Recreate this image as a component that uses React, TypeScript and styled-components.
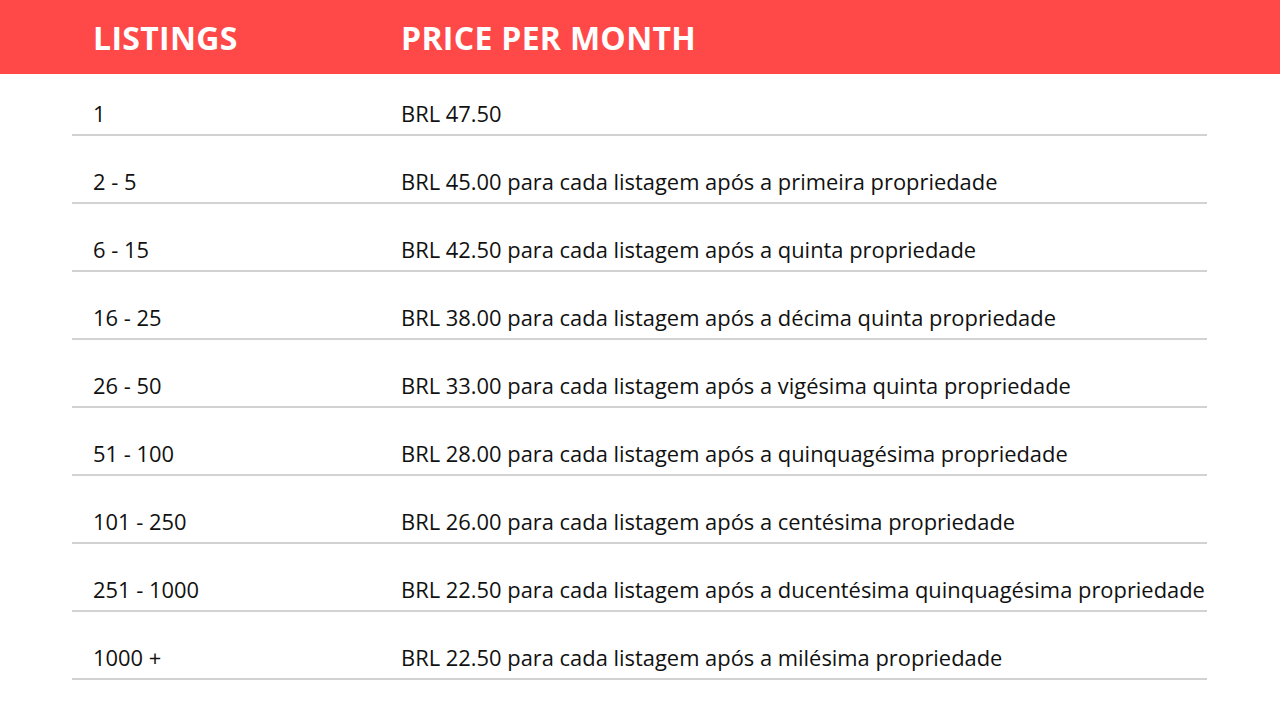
import styled, { createGlobalStyle } from 'styled-components';

const GlobalStyle = createGlobalStyle`
  body {
    margin: 0;
    background: #fff;
    font-family: 'Open Sans', 'Noto Sans', sans-serif;
  }
`;

const Page = styled.div`
  width: 1280px;
  height: 720px;
  overflow: hidden;
  background: #fff;
`;

const Header = styled.div`
  display: grid;
  grid-template-columns: 308px 1fr;
  align-items: center;
  height: 74px;
  padding-left: 93px;
  background-color: #ff4848;
  color: #fff;
  font-weight: 700;
  font-size: 32px;
  letter-spacing: 0.3px;
`;

const Table = styled.div`
  margin: 0 72px;
  width: 1135px;
`;

const Row = styled.div`
  display: grid;
  grid-template-columns: 308px 1fr;
  align-items: end;
  height: 68px;
  padding-left: 21px;
  padding-bottom: 7px;
  box-sizing: border-box;
  border-bottom: 2px solid #d2d2d2;
  color: #111;
  font-size: 21.9px;
  line-height: 26px;
  white-space: nowrap;

  &:first-child {
    height: 62px;
  }
`;

const rows: [string, string][] = [
  ['1', 'BRL 47.50'],
  ['2 - 5', 'BRL 45.00 para cada listagem após a primeira propriedade'],
  ['6 - 15', 'BRL 42.50 para cada listagem após a quinta propriedade'],
  ['16 - 25', 'BRL 38.00 para cada listagem após a décima quinta propriedade'],
  ['26 - 50', 'BRL 33.00 para cada listagem após a vigésima quinta propriedade'],
  ['51 - 100', 'BRL 28.00 para cada listagem após a quinquagésima propriedade'],
  ['101 - 250', 'BRL 26.00 para cada listagem após a centésima propriedade'],
  ['251 - 1000', 'BRL 22.50 para cada listagem após a ducentésima quinquagésima propriedade'],
  ['1000 +', 'BRL 22.50 para cada listagem após a milésima propriedade'],
];

const App = () => (
  <Page>
    <GlobalStyle />
    <Header>
      <span>LISTINGS</span>
      <span>PRICE PER MONTH</span>
    </Header>
    <Table>
      {rows.map(([range, price]) => (
        <Row key={range}>
          <span>{range}</span>
          <span>{price}</span>
        </Row>
      ))}
    </Table>
  </Page>
);

export default App;
